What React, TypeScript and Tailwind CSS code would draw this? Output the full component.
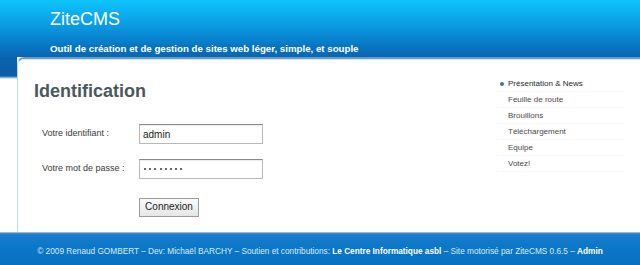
const menu = [
  "Présentation & News",
  "Feuille de route",
  "Brouillons",
  "Téléchargement",
  "Equipe",
  "Votez!",
];

function Field({ label, children }: { label: string; children: React.ReactNode }) {
  return (
    <div className="flex items-center h-[20px]">
      <span className="w-[97px] text-[9px] text-[#3a3a3a]">{label}</span>
      <div className="w-[124px] h-[20px] border border-[#b9b9b9] border-t-[#8a8a8a] bg-white flex items-center px-[3px] text-[10px] text-[#222] shadow-[inset_0_1px_1px_rgba(0,0,0,0.08)]">
        {children}
      </div>
    </div>
  );
}

export default function App() {
  return (
    <div
      className="w-[640px] h-[265px] overflow-hidden flex flex-col bg-white"
      style={{ fontFamily: '"Liberation Sans", Arial, sans-serif' }}
    >
      {/* header */}
      <header className="h-[57px] shrink-0 bg-[linear-gradient(to_bottom,#0ec4fb_0%,#0a9be2_45%,#0871be_85%,#0767b2_100%)] pl-[50px] pt-[8px]">
        <h1 className="text-[18px] leading-[22px] text-white">ZiteCMS</h1>
        <p className="mt-[13px] text-[9.7px] font-bold text-white leading-[12px]">
          Outil de création et de gestion de sites web léger, simple, et souple
        </p>
      </header>

      {/* body */}
      <div className="flex flex-1 min-h-0">
        <div className="w-[17px] shrink-0 bg-[linear-gradient(to_bottom,#0a62ae_0px,#0b5ea8_19px,#ffffff_22px)]" />
        <main className="flex-1 flex rounded-tl-[7px] border-t-[2px] border-l border-t-[#6c9cc5] border-l-[#c4d6e6] shadow-[inset_0_1px_0_#cfe7f6]">
          <section className="flex-1 pl-[16px] pt-[21px]">
            <h2 className="text-[18px] leading-[22px] font-bold text-[#4a585e]">Identification</h2>
            <div className="pl-[8px] pt-[22px] flex flex-col gap-[15px]">
              <Field label="Votre identifiant :">admin</Field>
              <Field label="Votre mot de passe :">
                <span className="flex gap-[3.2px] pl-[1px]">
                  {Array.from({ length: 8 }, (_, i) => (
                    <span key={i} className="block w-[2px] h-[2px] rounded-full bg-[#333]" />
                  ))}
                </span>
              </Field>
              <div className="pl-[97px] -mt-[1px]">
                <button
                  type="button"
                  className="h-[19px] w-[60px] border border-[#9c9c9c] bg-[linear-gradient(to_bottom,#fbfbfb,#e6e6e6)] text-[10px] text-[#222] leading-none"
                >
                  Connexion
                </button>
              </div>
            </div>
          </section>

          <aside className="w-[144px] shrink-0 pt-[17px]">
            <ul className="w-[130px]">
              {menu.map((item, i) => (
                <li
                  key={item}
                  className="h-[16px] flex items-center border-b border-dotted border-[#f1f3f7] text-[8px] text-[#4a4a4a]"
                >
                  <span className="w-[12px] flex justify-end pr-[4px]">
                    {i === 0 && <span className="block w-[4px] h-[4px] rounded-full bg-[#4d6f93]" />}
                  </span>
                  <span className={i === 0 ? "text-[#2a2a2a]" : ""}>{item}</span>
                </li>
              ))}
            </ul>
          </aside>
        </main>
      </div>

      {/* footer */}
      <footer className="h-[33px] shrink-0 border-t border-t-[#9ab8d2] bg-[linear-gradient(to_bottom,#3f8ccc_0px,#1a7ccb_2px,#0a78c9_40%,#0870c0_100%)] flex items-center justify-center pt-[6px] text-[8.25px] text-[#dbeaf7]">
        <p>
          © 2009 Renaud GOMBERT – Dev: Michaël BARCHY – Soutien et contributions:{" "}
          <span className="font-bold text-white">Le Centre Informatique asbl</span> – Site motorisé par ZiteCMS 0.6.5 –{" "}
          <span className="font-bold text-white">Admin</span>
        </p>
      </footer>
    </div>
  );
}
